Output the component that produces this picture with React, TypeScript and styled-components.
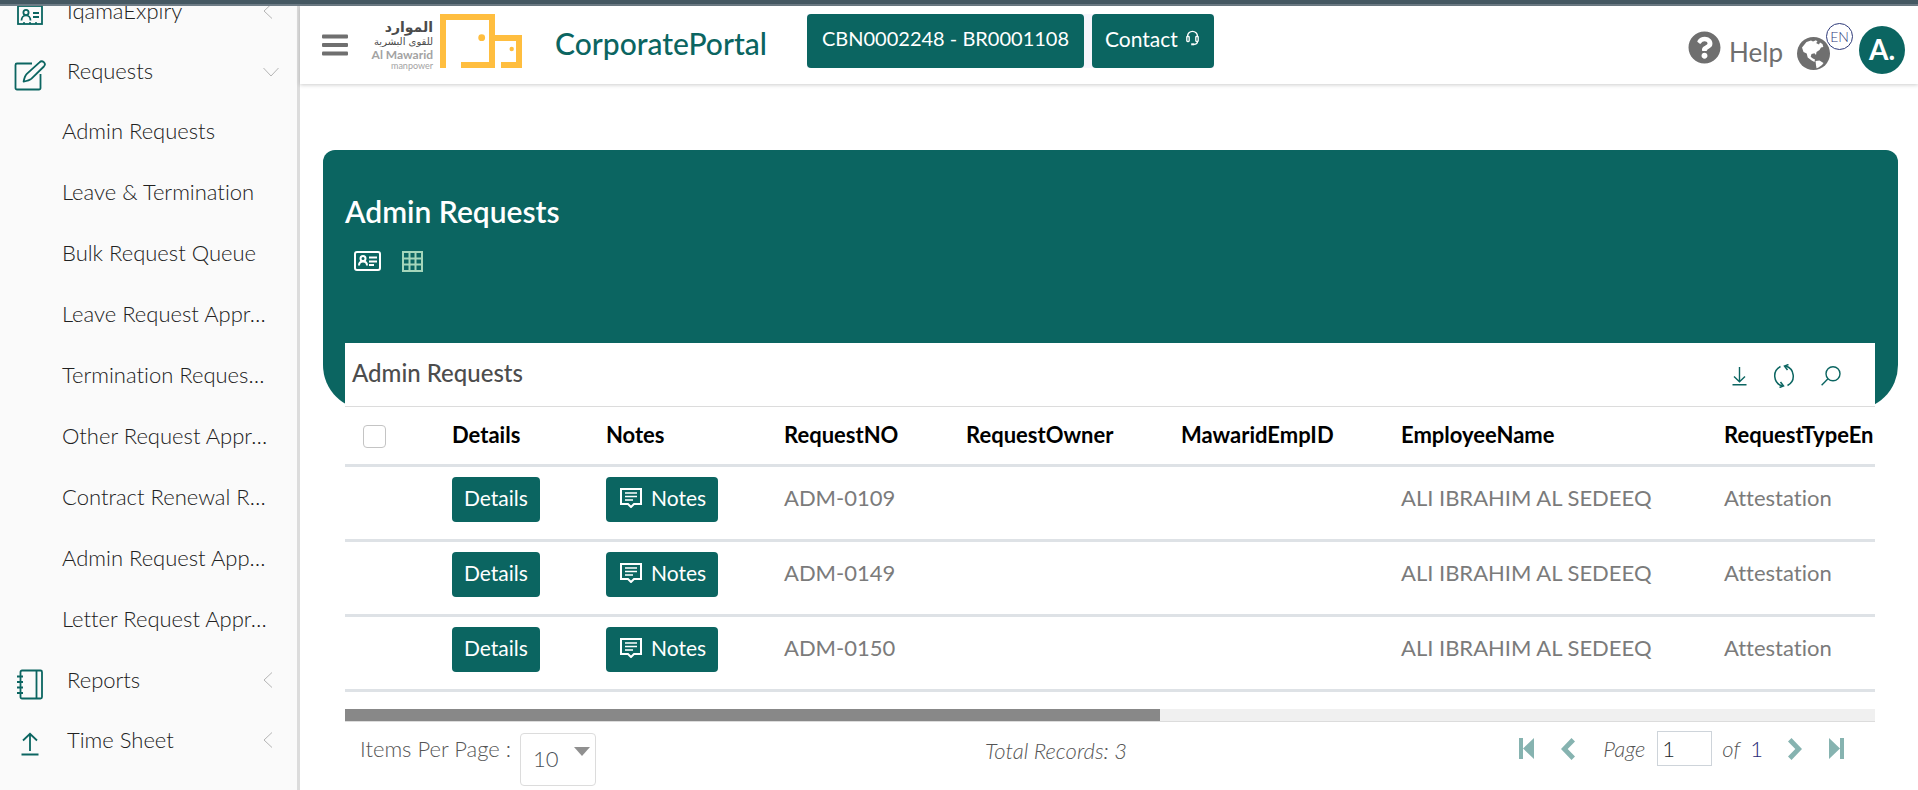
import React from 'react';
import styled, { createGlobalStyle, css } from 'styled-components';
import { FaQuestionCircle } from 'react-icons/fa';

const TEAL = '#0b6561';

const GlobalStyle = createGlobalStyle`
  *, *::before, *::after { box-sizing: border-box; }
  body {
    margin: 0;
    background: #fff;
    color: #212121;
    font-family: Lato, "Liberation Sans", sans-serif;
    font-size: 22px;
    font-weight: 300;
    font-variant-ligatures: none;
  }
  button, input, select { font: inherit; }
  a { color: inherit; text-decoration: none; }
  svg { display: block; flex: none; }
`;

/* ---------- Shell ---------- */

const Page = styled.div`
  min-height: 100vh;
  display: flex;
  flex-direction: column;
`;

const TopStrip = styled.div`
  height: 6px;
  flex: none;
  background: #455862;
  border-bottom: 2px solid #6e7c86;
`;

const Body = styled.div`
  flex: 1;
  display: grid;
  grid-template-columns: 300px minmax(0, 1fr);
`;

const Main = styled.main`
  min-width: 0;
`;

/* ---------- Sidebar ---------- */

const Sidebar = styled.nav`
  background: #fafafa;
  border-right: 3px solid #dcdcdc;
  overflow: hidden;
`;

const MenuList = styled.ul`
  list-style: none;
  margin: -26px 0 0;
  padding: 0;
`;

const SubList = styled.ul`
  list-style: none;
  margin: 0;
  padding: 0;
`;

const MenuLink = styled.a`
  height: 60px;
  display: grid;
  grid-template-columns: 67px 1fr auto;
  align-items: center;
  padding-right: 18px;
`;

const MenuIcon = styled.span`
  width: 60px;
  padding-top: 10px;
  display: flex;
  justify-content: center;
  color: ${TEAL};
`;

const Caret = styled.svg`
  width: 16px;
  height: 18px;
  padding-top: 2px;
  fill: none;
  stroke: #b4b4b4;
`;

const SubLink = styled.a`
  display: block;
  height: 61px;
  line-height: 62px;
  padding-left: 62px;
  white-space: nowrap;
`;

/* ---------- Header ---------- */

const Header = styled.header`
  height: 78px;
  display: flex;
  align-items: flex-start;
  padding: 8px 13px 0 22px;
  box-shadow: 0 1px 4px rgba(0, 0, 0, 0.2);
`;

const IconButton = styled.button`
  display: flex;
  padding: 0;
  border: 0;
  background: none;
  color: inherit;
  cursor: pointer;
`;

const MenuToggle = styled(IconButton)`
  margin-top: 20px;
  color: #6f6f6f;
`;

const Brand = styled.a`
  display: flex;
  gap: 7px;
  margin-left: 22px;
`;

const BrandText = styled.span`
  width: 63px;
  display: flex;
  flex-direction: column;
  align-items: flex-end;
  padding-top: 6px;
  white-space: nowrap;
`;

const BrandName = styled.span`
  font: bold 14px/15px "DejaVu Sans", sans-serif;
  color: #4b4b4b;
`;

const BrandSub = styled.span`
  font: 10px/14px "DejaVu Sans", sans-serif;
  color: #4b4b4b;
`;

const BrandLatin = styled.span`
  font-size: 12px;
  font-weight: 700;
  line-height: 12px;
  color: #a3a3a3;
`;

const BrandTag = styled.span`
  font-size: 9px;
  font-weight: 400;
  line-height: 9px;
  color: #a3a3a3;
`;

const PortalName = styled.h1`
  margin: 0 0 0 33px;
  font-size: 30px;
  font-weight: 500;
  line-height: 58px;
  color: ${TEAL};
`;

const HeaderButtons = styled.div`
  display: flex;
  gap: 8px;
  margin-left: 40px;
  background: #f6f5fc;
`;

const solidButton = css`
  display: flex;
  align-items: center;
  border: 0;
  border-radius: 4px;
  background: ${TEAL};
  color: #fff;
  font-weight: 400;
  white-space: nowrap;
  cursor: pointer;
`;

const HeaderButton = styled.button`
  ${solidButton}
  height: 54px;
  gap: 8px;
  padding: 0 15px 6px 13px;
  font-size: 21px;
`;

const AccountButton = styled(HeaderButton)`
  padding-left: 15px;
  font-size: 20px;
`;

const HeaderTools = styled.div`
  display: flex;
  align-items: flex-start;
  margin-left: auto;
  color: #6f6f6f;
`;

const HelpLink = styled.a`
  display: flex;
  gap: 8px;
  margin-top: 17px;
  font-size: 26px;
  font-weight: 400;
  line-height: 42px;
`;

const LanguageButton = styled(IconButton)`
  position: relative;
  margin: 23px 29px 0 14px;
`;

const LanguageBadge = styled.span`
  position: absolute;
  left: 29px;
  bottom: 20px;
  width: 27px;
  height: 27px;
  border: 1px solid #2f3b7a;
  border-radius: 50%;
  font-size: 14px;
  line-height: 25px;
  text-align: center;
  color: #2f3b7a;
`;

const Avatar = styled.button`
  width: 46px;
  height: 48px;
  margin-top: 12px;
  padding: 0 0 2px;
  border: 0;
  border-radius: 50%;
  background: ${TEAL};
  color: #fff;
  font-size: 28px;
  font-weight: 700;
`;

/* ---------- Content ---------- */

const Content = styled.div`
  padding: 66px 20px 0 23px;
`;

const Banner = styled.section`
  height: 260px;
  padding: 43px 22px 0;
  border-radius: 12px 12px 45px 45px;
  background: ${TEAL};
  color: #fff;
`;

const BannerTitle = styled.h2`
  margin: 0;
  font-size: 30px;
  font-weight: 600;
  line-height: 36px;
`;

const ViewSwitch = styled.div`
  display: flex;
  gap: 21px;
  margin-top: 22px;
  padding-left: 9px;
`;

const GridViewButton = styled(IconButton)`
  color: #a5d6bb;
`;

const Card = styled.section`
  margin: -67px 23px 0 22px;
  background: #fff;
`;

const CardHeader = styled.div`
  height: 64px;
  display: flex;
  align-items: center;
  justify-content: space-between;
  padding: 0 34px 5px 7px;
  border-bottom: 1px solid #dcdcdc;
`;

const CardTitle = styled.h3`
  margin: 0;
  font-size: 24px;
  font-weight: 500;
  color: #4d4d4d;
`;

const CardActions = styled.div`
  display: flex;
  align-items: center;
  gap: 26px;
  padding-top: 8px;
  color: ${TEAL};
`;

const TableViewport = styled.div`
  overflow: hidden;
`;

const Table = styled.table`
  width: 2870px;
  table-layout: fixed;
  border-collapse: separate;
  border-spacing: 0;
`;

const Column = styled.col<{ $width?: number }>`
  ${({ $width }) => $width && `width: ${$width}px;`}
`;

const HeadCell = styled.th`
  height: 60px;
  padding: 0 0 2px 12px;
  border-bottom: 3px solid #dee2e6;
  font-weight: 700;
  text-align: left;
  color: #000;
`;

const Cell = styled.td`
  padding: 10px 0 17px 12px;
  border-bottom: 3px solid #dee2e6;
  font-weight: 400;
  line-height: 42px;
  vertical-align: top;
  white-space: nowrap;
  color: #7b7b7b;
`;

const CheckBox = styled.input`
  appearance: none;
  display: block;
  width: 23px;
  height: 23px;
  margin: 3px 0 0 6px;
  border: 1px solid #c4c4c4;
  border-radius: 4px;
  background: #fff;
`;

const RowButton = styled.button`
  ${solidButton}
  height: 45px;
  gap: 9px;
  padding: 0 12px 3px;
  font-size: 21px;
`;

const NotesButton = styled(RowButton)`
  padding-left: 14px;
`;

const ScrollTrack = styled.div`
  height: 13px;
  margin-top: 17px;
  border-bottom: 1px solid #dcdcdc;
  background: #f0f0f0;
`;

const ScrollThumb = styled.div`
  width: 53.3%;
  height: 12px;
  background: #888;
`;

const CardFooter = styled.div`
  display: grid;
  grid-template-columns: 640px 1fr auto;
  align-items: start;
  padding: 9px 31px 4px 0;
  line-height: 31px;
  color: #555;
`;

const PageSize = styled.label`
  display: flex;
  gap: 9px;
  padding: 2px 0 0 15px;
`;

const SelectBox = styled.span`
  display: grid;

  > * { grid-area: 1 / 1; }
  > svg {
    justify-self: end;
    margin: 14px 6px 0 0;
    pointer-events: none;
  }
`;

const Select = styled.select`
  appearance: none;
  width: 76px;
  height: 53px;
  padding: 0 12px 2px;
  border: 1px solid #dcdcdc;
  border-radius: 4px;
  background: #fff;
  color: #495057;
`;

const Total = styled.em`
  padding-top: 4px;
`;

const Pager = styled.div`
  display: flex;
  align-items: center;
`;

const PagerButton = styled(IconButton)`
  color: #86b3b0;

  & + & { margin-left: 27px; }
`;

const PageField = styled.label`
  display: flex;
  align-items: center;
  gap: 10px;
  margin: 0 25px 0 28px;
`;

const PageInput = styled.input`
  width: 55px;
  height: 35px;
  margin-left: 2px;
  padding: 0 4px;
  border: 1px solid #ced4da;
  color: #212529;
`;

const PageCount = styled.span`
  color: #2b2b78;
`;

/* ---------- Drawings ---------- */

const IdBadgeIcon = () => (
  <svg width="26" height="20" viewBox="0 0 26 20" fill="none" stroke="currentColor" strokeWidth="1.8">
    <rect x="1" y="1" width="24" height="18" />
    <circle cx="9" cy="7.5" r="2.6" />
    <path d="M4.5 15.500c0-3 2-5.200 4.500-5.200s4.500 2.200 4.500 5.200M16 8h6M16 12h6" />
    <path d="M6 18.200h2M12 18.200h2M18 18.200h2" />
  </svg>
);

const EditIcon = () => (
  <svg width="32" height="31" viewBox="0 0 32 31" fill="none" stroke="currentColor" strokeWidth="1.8" strokeLinejoin="round">
    <path d="M18 3.500H3A1.500 1.500 0 0 0 1.500 5v23A1.500 1.500 0 0 0 3 29.500h22A1.500 1.500 0 0 0 26.500 28V14" />
    <path d="M25.500 2.300a3 3 0 0 1 4.400 4.200L17.500 18.700c-2 1.800-4.500 2.400-7.900 3 .6-3.600 1.200-5.900 3.200-7.900z" />
  </svg>
);

const NotebookIcon = () => (
  <svg width="26" height="31" viewBox="0 0 26 31" fill="none" stroke="currentColor" strokeWidth="1.8" strokeLinejoin="round">
    <rect x="3.500" y="1.500" width="21.500" height="28" rx="1.500" />
    <path d="M19.500 1.500v28M0 7.500h6M0 13h6M0 18.500h6M0 24h6" />
  </svg>
);

const UploadIcon = () => (
  <svg width="18" height="24" viewBox="0 0 18 24" fill="none" stroke="currentColor" strokeWidth="1.8">
    <path d="M9 19V2M2 8.500L9 1.800l7 6.700M0.500 22.500h17" />
  </svg>
);

const HamburgerIcon = () => (
  <svg width="26" height="22" viewBox="0 0 26 22" fill="currentColor">
    <rect y="0.500" width="26" height="4" rx="1" />
    <rect y="9" width="26" height="4" rx="1" />
    <rect y="17.500" width="26" height="4" rx="1" />
  </svg>
);

const LogoMark = () => (
  <svg width="82" height="54" viewBox="0 0 82 54">
    <path fill="none" stroke="#ffbe3f" strokeWidth="6" d="M3 54V3h49v48H21M55 24h24v27H61" />
    <path fill="#ffbe3f" d="M52 21h6v6h-6z" />
    <circle cx="41.700" cy="23.700" r="3.400" fill="#ffbe3f" />
    <circle cx="71.700" cy="35" r="2.200" fill="#ffbe3f" />
  </svg>
);

const HeadsetIcon = () => (
  <svg width="13" height="16" viewBox="0 0 13 16" fill="none" stroke="currentColor" strokeWidth="1.300">
    <path d="M1.500 7V6.300a5 5 0 0 1 10 0V7M11.500 11.500c0 2-1.500 2.800-3.500 2.800" />
    <rect x="0.800" y="6.500" width="2.400" height="5" rx="0.800" />
    <rect x="9.800" y="6.500" width="2.400" height="5" rx="0.800" />
    <path strokeWidth="2" d="M5.200 14.300h3" />
  </svg>
);

const GlobeIcon = () => (
  <svg width="33" height="33" viewBox="0 0 33 33">
    <circle cx="16.500" cy="16.500" r="16.500" fill="#6f6f6f" />
    <path
      fill="#fff"
      d="M5 10.500L9.500 5l4.500-1.500 2 1 3-1.200 1.500 1.500L19 6l3 1.500 1-2 2.500 1.500.8 3-2.300.5-1.500 2.500-3 2-.5 3-1.500-1.800-3 .8-.8 2.800 1.800 1.500 2.500 1.200-.5 2.500-2.800-1.500-4-3-1-4L6.500 15z"
    />
    <path fill="#fff" d="M18.500 24l4-.5 4 2.500-1.500 2-3.500 2.500-2 .8-.5-3z" />
  </svg>
);

const CardViewIcon = () => (
  <svg width="27" height="20" viewBox="0 0 27 20" fill="none" stroke="currentColor" strokeWidth="2">
    <rect x="1" y="1" width="25" height="18" rx="2" />
    <circle cx="9" cy="7.500" r="2.500" />
    <path d="M5 14.500c0-2.500 1.600-4 4-4s4 1.500 4 4M15 6.500h8M15 10.500h8M15 14h5" />
  </svg>
);

const GridViewIcon = () => (
  <svg width="21" height="21" viewBox="0 0 21 21" fill="none" stroke="currentColor" strokeWidth="2">
    <path d="M1 1h19v19H1zM7.500 1v19M13.500 1v19M1 7.500h19M1 13.500h19" />
  </svg>
);

const DownloadIcon = () => (
  <svg width="15" height="19" viewBox="0 0 15 19" fill="none" stroke="currentColor" strokeWidth="1.400">
    <path d="M7.500 0v14.500M2 9.500l5.500 5.200L13 9.500M0.500 17.800h14" />
  </svg>
);

const RefreshIcon = () => (
  <svg width="22" height="24" viewBox="0 0 22 24" fill="none" stroke="currentColor" strokeWidth="1.500">
    <path d="M7.500 2.500A10.500 10.500 0 0 0 9.500 22M14.500 21.500A10.500 10.500 0 0 0 12.500 2" />
    <path d="M15.500 0.500L11.500 2l3 4M6.500 23.500l4-1.500-3-4" />
  </svg>
);

const SearchIcon = () => (
  <svg width="20" height="20" viewBox="0 0 20 20" fill="none" stroke="currentColor" strokeWidth="1.400">
    <circle cx="12" cy="7.800" r="7" />
    <path d="M7 12.800L0.600 19.200" />
  </svg>
);

const NoteIcon = () => (
  <svg width="22" height="20" viewBox="0 0 22 20" fill="none" stroke="currentColor" strokeWidth="2">
    <path d="M1 1h20v15h-7l-3 3-3-3H1z" />
    <path d="M5 5h12M5 8.500h12M5 12h8" strokeWidth="1.700" />
  </svg>
);

const ArrowDownIcon = () => (
  <svg width="16" height="9" viewBox="0 0 16 9">
    <path fill="#909090" d="M0 0h16L8 9z" />
  </svg>
);

const FirstIcon = () => (
  <svg width="15" height="21" viewBox="0 0 15 21" fill="currentColor">
    <path d="M0 0h4v21H0zM15 0v21L4 10.500z" />
  </svg>
);

const PrevIcon = () => (
  <svg width="14" height="22" viewBox="0 0 14 22" fill="currentColor">
    <path d="M10.500 0L14 3.500 6.700 11 14 18.500 10.500 22 0 11z" />
  </svg>
);

const NextIcon = () => (
  <svg width="14" height="22" viewBox="0 0 14 22" fill="currentColor">
    <path d="M3.500 0L0 3.500 7.300 11 0 18.500 3.500 22 14 11z" />
  </svg>
);

const LastIcon = () => (
  <svg width="15" height="21" viewBox="0 0 15 21" fill="currentColor">
    <path d="M11 0h4v21h-4zM0 0v21l11-10.500z" />
  </svg>
);

/* ---------- Data ---------- */

const requestLinks = [
  'Admin Requests',
  'Leave & Termination',
  'Bulk Request Queue',
  'Leave Request Appr…',
  'Termination Reques…',
  'Other Request Appr…',
  'Contract Renewal R…',
  'Admin Request App…',
  'Letter Request Appr…',
];

const rows = ['ADM-0109', 'ADM-0149', 'ADM-0150'].map((no) => ({
  no,
  employee: 'ALI IBRAHIM AL SEDEEQ',
  type: 'Attestation',
}));

function MenuItem({ icon, label, open, children }: {
  icon: React.ReactNode;
  label: string;
  open?: boolean;
  children?: React.ReactNode;
}) {
  return (
    <li>
      <MenuLink href="#">
        <MenuIcon>{icon}</MenuIcon>
        {label}
        <Caret viewBox="0 0 16 16" aria-hidden="true">
          <path d={open ? 'M0.500 5l7.500 8 7.500-8' : 'M9 0.500L1 8l8 7.500'} />
        </Caret>
      </MenuLink>
      {children}
    </li>
  );
}

export default function App() {
  return (
    <Page>
      <GlobalStyle />
      <TopStrip />
      <Body>
        <Sidebar>
          <MenuList>
            <MenuItem icon={<IdBadgeIcon />} label="IqamaExpiry" />
            <MenuItem icon={<EditIcon />} label="Requests" open>
              <SubList>
                {requestLinks.map((label) => (
                  <li key={label}>
                    <SubLink href="#">{label}</SubLink>
                  </li>
                ))}
              </SubList>
            </MenuItem>
            <MenuItem icon={<NotebookIcon />} label="Reports" />
            <MenuItem icon={<UploadIcon />} label="Time Sheet" />
          </MenuList>
        </Sidebar>

        <Main>
          <Header>
            <MenuToggle aria-label="Toggle menu"><HamburgerIcon /></MenuToggle>
            <Brand href="#">
              <BrandText>
                <BrandName lang="ar" dir="rtl">الموارد</BrandName>
                <BrandSub lang="ar" dir="rtl">للقوى البشرية</BrandSub>
                <BrandLatin>Al Mawarid</BrandLatin>
                <BrandTag>manpower</BrandTag>
              </BrandText>
              <LogoMark />
            </Brand>
            <PortalName>CorporatePortal</PortalName>
            <HeaderButtons>
              <AccountButton>CBN0002248 - BR0001108</AccountButton>
              <HeaderButton>Contact <HeadsetIcon /></HeaderButton>
            </HeaderButtons>
            <HeaderTools>
              <HelpLink href="#">
                <FaQuestionCircle size={33} />
                Help
              </HelpLink>
              <LanguageButton aria-label="Language">
                <GlobeIcon />
                <LanguageBadge>EN</LanguageBadge>
              </LanguageButton>
              <Avatar>A.</Avatar>
            </HeaderTools>
          </Header>

          <Content>
            <Banner>
              <BannerTitle>Admin Requests</BannerTitle>
              <ViewSwitch>
                <IconButton aria-label="Card view"><CardViewIcon /></IconButton>
                <GridViewButton aria-label="Grid view"><GridViewIcon /></GridViewButton>
              </ViewSwitch>
            </Banner>

            <Card>
              <CardHeader>
                <CardTitle>Admin Requests</CardTitle>
                <CardActions>
                  <IconButton aria-label="Download"><DownloadIcon /></IconButton>
                  <IconButton aria-label="Refresh"><RefreshIcon /></IconButton>
                  <IconButton aria-label="Search"><SearchIcon /></IconButton>
                </CardActions>
              </CardHeader>

              <TableViewport>
                <Table>
                  <colgroup>
                    <Column $width={95} />
                    <Column $width={154} />
                    <Column $width={178} />
                    <Column $width={182} />
                    <Column $width={215} />
                    <Column $width={220} />
                    <Column $width={323} />
                    <Column />
                  </colgroup>
                  <thead>
                    <tr>
                      <HeadCell><CheckBox type="checkbox" aria-label="Select all" /></HeadCell>
                      <HeadCell>Details</HeadCell>
                      <HeadCell>Notes</HeadCell>
                      <HeadCell>RequestNO</HeadCell>
                      <HeadCell>RequestOwner</HeadCell>
                      <HeadCell>MawaridEmpID</HeadCell>
                      <HeadCell>EmployeeName</HeadCell>
                      <HeadCell>RequestTypeEn</HeadCell>
                    </tr>
                  </thead>
                  <tbody>
                    {rows.map((row) => (
                      <tr key={row.no}>
                        <Cell />
                        <Cell><RowButton>Details</RowButton></Cell>
                        <Cell><NotesButton><NoteIcon />Notes</NotesButton></Cell>
                        <Cell>{row.no}</Cell>
                        <Cell />
                        <Cell />
                        <Cell>{row.employee}</Cell>
                        <Cell>{row.type}</Cell>
                      </tr>
                    ))}
                  </tbody>
                </Table>
              </TableViewport>
              <ScrollTrack><ScrollThumb /></ScrollTrack>

              <CardFooter>
                <PageSize>
                  Items Per Page :
                  <SelectBox>
                    <Select defaultValue="10">
                      <option>10</option>
                      <option>20</option>
                      <option>50</option>
                    </Select>
                    <ArrowDownIcon />
                  </SelectBox>
                </PageSize>
                <Total>Total Records: 3</Total>
                <Pager>
                  <PagerButton aria-label="First page"><FirstIcon /></PagerButton>
                  <PagerButton aria-label="Previous page"><PrevIcon /></PagerButton>
                  <PageField>
                    <em>Page</em>
                    <PageInput defaultValue="1" />
                    <em>of</em>
                    <PageCount>1</PageCount>
                  </PageField>
                  <PagerButton aria-label="Next page"><NextIcon /></PagerButton>
                  <PagerButton aria-label="Last page"><LastIcon /></PagerButton>
                </Pager>
              </CardFooter>
            </Card>
          </Content>
        </Main>
      </Body>
    </Page>
  );
}
